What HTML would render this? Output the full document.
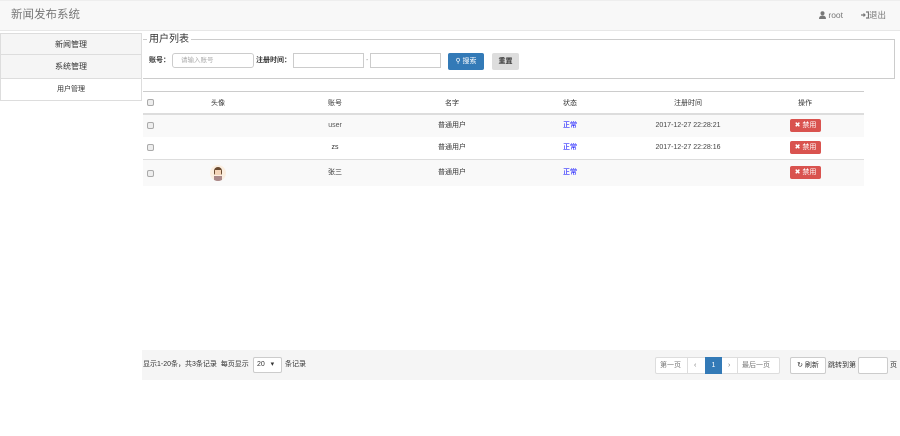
<!DOCTYPE html>
<html><head><meta charset="utf-8"><style>
*{box-sizing:border-box;margin:0;padding:0}
body{width:900px;height:436px;background:#fff;font-family:"Liberation Sans","Noto Sans CJK SC",sans-serif;font-size:7px;color:#333;position:relative;overflow:hidden;line-height:8px}
.abs{position:absolute}
.nav{left:0;top:0;width:900px;height:31px;background:#f8f8f8;border-bottom:1px solid #e7e7e7;border-top:1px solid #eee}
.side div{position:absolute;left:0;width:142px;text-align:center;font-size:8px}
.cb{position:absolute;width:7px;height:7px;border:1px solid #aaa;border-radius:2px;background:#eee}
.c{position:absolute;text-align:center;transform:translateX(-50%);white-space:nowrap;line-height:8px}
.btn-d{position:absolute;left:790px;width:31px;height:13px;background:#d9534f;border-radius:2px;color:#fff;font-size:7px;line-height:13px;text-align:center}
.inp{position:absolute;height:15px;border:1px solid #ccc;background:#fff}
</style></head><body>
<div class="abs nav"></div>
<div class="abs" style="left:11px;top:9px;font-size:11.5px;line-height:13px;color:#777">新闻发布系统</div>
<div class="abs" style="left:819px;top:11px;font-size:8.5px;line-height:9px;color:#777"><svg width="7" height="8" viewBox="0 0 7 8" style="vertical-align:-1px"><circle cx="3.5" cy="2.2" r="2" fill="#777"/><path d="M0 8 Q0 4.5 3.5 4.5 Q7 4.5 7 8Z" fill="#777"/></svg> root</div>
<div class="abs" style="left:861px;top:11px;font-size:8.5px;line-height:9px;color:#777"><svg width="8" height="8" viewBox="0 0 8 8" style="vertical-align:-1px"><path d="M0 4H4M2.5 2.5L4 4L2.5 5.5M5 1H7.5V7H5" stroke="#777" fill="none" stroke-width="1.2"/></svg>退出</div>
<div class="side">
<div style="top:33px;height:22px;line-height:22px;background:#f5f5f5;border:1px solid #ddd">新闻管理</div>
<div style="top:55px;height:24px;line-height:24px;background:#f5f5f5;border:1px solid #ddd;border-top:none">系统管理</div>
<div style="top:79px;height:22px;line-height:22px;background:#fff;border:1px solid #ddd;border-top:none;font-size:7px">用户管理</div>
</div>
<div class="abs" style="left:143px;top:39px;width:752px;height:40px;border:1px solid #ccc;border-left:none"></div>
<div class="abs" style="left:147px;top:34px;font-size:10px;line-height:11px;background:#fff;padding:0 2px;color:#333">用户列表</div>
<div class="abs" style="left:149px;top:57px;font-weight:bold">账号：</div>
<div class="inp" style="left:172px;top:53px;width:82px;border-radius:3px;color:#aaa;padding:3px 0 0 8px;font-size:6.5px">请输入账号</div>
<div class="abs" style="left:256px;top:57px;font-weight:bold">注册时间：</div>
<div class="inp" style="left:293px;top:53px;width:71px"></div>
<div class="abs" style="left:366px;top:57px;color:#999">-</div>
<div class="inp" style="left:370px;top:53px;width:71px"></div>
<div class="abs" style="left:448px;top:53px;width:36px;height:17px;background:#337ab7;border-radius:2px;color:#fff;line-height:17px;text-align:center">&#9906; 搜索</div>
<div class="abs" style="left:492px;top:53px;width:27px;height:17px;background:#ddd;border-radius:2px;line-height:17px;text-align:center;font-weight:bold">重置</div>
<div class="abs" style="left:143px;top:91px;width:721px;height:1px;background:#ccc"></div>
<div class="abs" style="left:143px;top:113px;width:721px;height:2px;background:#ddd"></div>
<div class="abs" style="left:143px;top:115px;width:721px;height:22px;background:#f9f9f9"></div>
<div class="abs" style="left:143px;top:159px;width:721px;height:1px;background:#ddd"></div>
<div class="abs" style="left:143px;top:160px;width:721px;height:26px;background:#f9f9f9"></div>
<div class="cb" style="left:147px;top:99px"></div><div class="cb" style="left:147px;top:122px"></div><div class="cb" style="left:147px;top:144px"></div><div class="cb" style="left:147px;top:170px"></div>
<div class="c" style="left:218px;top:100px">头像</div><div class="c" style="left:335px;top:100px">账号</div><div class="c" style="left:452px;top:100px">名字</div><div class="c" style="left:570px;top:100px">状态</div><div class="c" style="left:688px;top:100px">注册时间</div><div class="c" style="left:805px;top:100px">操作</div>
<div class="c" style="left:335px;top:122px;color:#555">user</div><div class="c" style="left:452px;top:122px">普通用户</div><div class="c" style="left:570px;top:122px;color:#00f">正常</div><div class="c" style="left:688px;top:122px;color:#444">2017-12-27 22:28:21</div>
<div class="c" style="left:335px;top:144px">zs</div><div class="c" style="left:452px;top:144px">普通用户</div><div class="c" style="left:570px;top:144px;color:#00f">正常</div><div class="c" style="left:688px;top:144px;color:#444">2017-12-27 22:28:16</div>
<div class="abs" style="left:210px;top:165px;width:16px;height:16px;border-radius:50%;background:#fbeee0;overflow:hidden"><div style="position:absolute;left:4px;top:2px;width:8px;height:8px;border-radius:50% 50% 2px 2px;background:#6a4a30"></div><div style="position:absolute;left:5px;top:5px;width:6px;height:5px;background:#f4d4b8"></div><div style="position:absolute;left:4px;top:11px;width:8px;height:5px;background:#a88"></div></div>
<div class="c" style="left:335px;top:169px">张三</div><div class="c" style="left:452px;top:169px">普通用户</div><div class="c" style="left:570px;top:169px;color:#00f">正常</div>
<div class="btn-d" style="top:119px">&#10006; 禁用</div><div class="btn-d" style="top:141px">&#10006; 禁用</div><div class="btn-d" style="top:166px">&#10006; 禁用</div>
<div class="abs" style="left:142px;top:350px;width:758px;height:30px;background:#f5f5f5"></div>
<div class="abs" style="left:143px;top:361px">显示1-20条，共3条记录&nbsp; 每页显示</div>
<div class="inp" style="left:253px;top:357px;width:29px;height:16px;border-radius:2px;padding:3px 0 0 3px">20 &nbsp; ▾</div>
<div class="abs" style="left:285px;top:361px">条记录</div>
<div class="abs" style="left:655px;top:357px;width:125px;height:17px;border:1px solid #ddd;border-radius:2px;background:#fff"></div>
<div class="abs" style="left:660px;top:362px;color:#777">第一页</div>
<div class="abs" style="left:687px;top:357px;width:1px;height:17px;background:#ddd"></div>
<div class="abs" style="left:694px;top:362px;color:#777">‹</div>
<div class="abs" style="left:705px;top:357px;width:17px;height:17px;background:#337ab7;color:#fff;text-align:center;line-height:17px">1</div>
<div class="abs" style="left:728px;top:362px;color:#777">›</div>
<div class="abs" style="left:737px;top:357px;width:1px;height:17px;background:#ddd"></div>
<div class="abs" style="left:742px;top:362px;color:#777">最后一页</div>
<div class="abs" style="left:790px;top:357px;width:36px;height:17px;border:1px solid #ccc;border-radius:2px;background:#fff;line-height:15px;text-align:center">&#8635; 刷新</div>
<div class="abs" style="left:828px;top:362px">跳转到第</div>
<div class="inp" style="left:858px;top:357px;width:30px;height:17px;border-radius:2px"></div>
<div class="abs" style="left:890px;top:362px">页</div>
</body></html>
